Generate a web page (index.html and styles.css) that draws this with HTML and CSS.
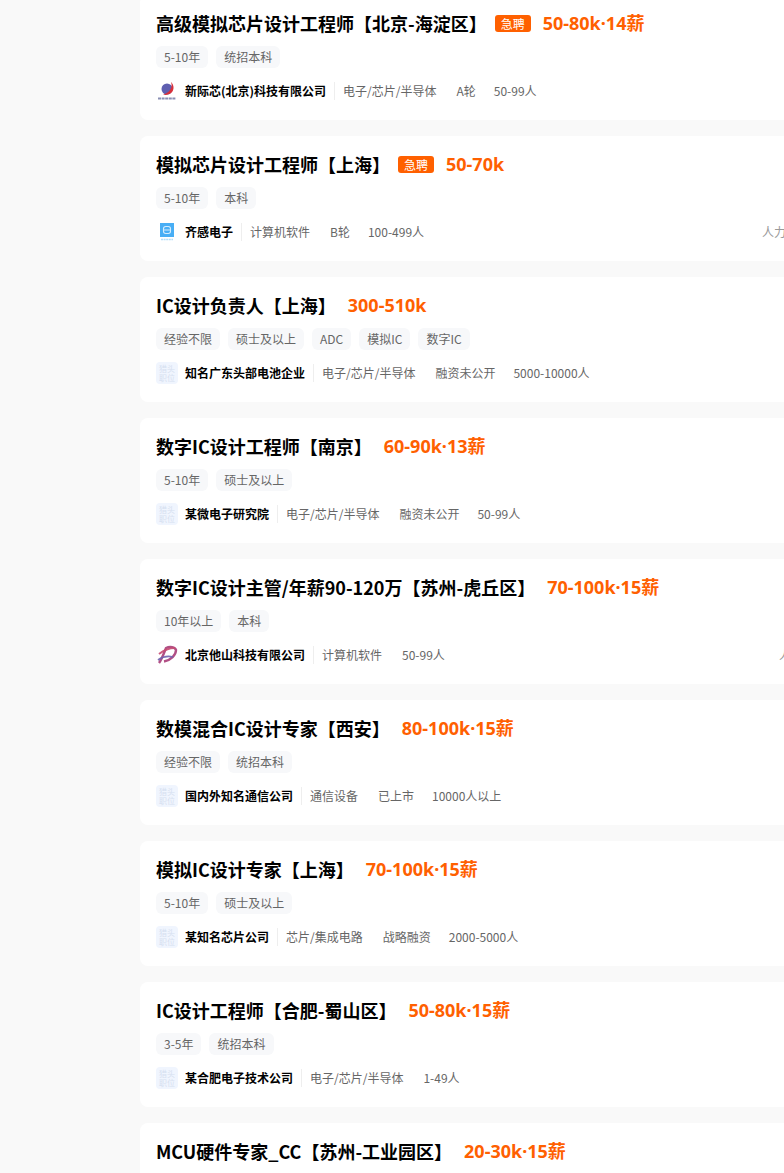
FILE: index.html
```html
<!DOCTYPE html>
<html lang="zh-CN">
<head>
  <meta charset="UTF-8" />
  <title>职位列表</title>
  <link rel="stylesheet" href="styles.css">
</head>
<body>
  <main class="job-list">

    <article class="job">
      <div class="job-title">
        <h3>高级模拟芯片设计工程师【北京-海淀区】</h3>
        <span class="urgent">急聘</span>
        <span class="salary">50-80k·14薪</span>
      </div>
      <div class="tags"><span>5-10年</span><span>统招本科</span></div>
      <div class="company">
        <svg class="logo" viewBox="0 0 22 22">
          <circle cx="11" cy="9" r="5.5" fill="#5f5fb0"/>
          <path d="M15 2 C17 7 14 13 7 14.5 C12 16 18 13 17.5 7 C17.3 5 16.4 3 15 2 Z" fill="#d8303a"/>
          <path d="M2 18.5h18" stroke="#8a8fb4" stroke-width="2" stroke-dasharray="3 .6"/>
        </svg>
        <strong>新际芯(北京)科技有限公司</strong>
        <span class="info">电子/芯片/半导体</span><span class="info">A轮</span><span class="info">50-99人</span>
      </div>
    </article>

    <article class="job">
      <div class="job-title">
        <h3>模拟芯片设计工程师【上海】</h3>
        <span class="urgent">急聘</span>
        <span class="salary">50-70k</span>
      </div>
      <div class="tags"><span>5-10年</span><span>本科</span></div>
      <div class="company">
        <svg class="logo" viewBox="0 0 22 22">
          <rect x="4" y="2" width="14" height="14" fill="#48aef5"/>
          <rect x="7.5" y="5.5" width="7" height="7" rx="2.2" fill="none" stroke="#d4ecfd" stroke-width="1.1"/>
          <path d="M7.5 9h7" stroke="#d4ecfd" stroke-width="1"/>
          <path d="M5 18.5h12" stroke="#b5def9" stroke-width="1.5" stroke-dasharray="2 .6"/>
        </svg>
        <strong>齐感电子</strong>
        <span class="info">计算机软件</span><span class="info">B轮</span><span class="info">100-499人</span>
        <span class="perks">人力资源服务</span>
      </div>
    </article>

    <article class="job">
      <div class="job-title">
        <h3>IC设计负责人【上海】</h3>
        <span class="salary">300-510k</span>
      </div>
      <div class="tags"><span>经验不限</span><span>硕士及以上</span><span>ADC</span><span>模拟IC</span><span>数字IC</span></div>
      <div class="company">
        <span class="logo logo-hidden">猎头<br>职位</span>
        <strong>知名广东头部电池企业</strong>
        <span class="info">电子/芯片/半导体</span><span class="info">融资未公开</span><span class="info">5000-10000人</span>
      </div>
    </article>

    <article class="job">
      <div class="job-title">
        <h3>数字IC设计工程师【南京】</h3>
        <span class="salary">60-90k·13薪</span>
      </div>
      <div class="tags"><span>5-10年</span><span>硕士及以上</span></div>
      <div class="company">
        <span class="logo logo-hidden">猎头<br>职位</span>
        <strong>某微电子研究院</strong>
        <span class="info">电子/芯片/半导体</span><span class="info">融资未公开</span><span class="info">50-99人</span>
      </div>
    </article>

    <article class="job">
      <div class="job-title">
        <h3>数字IC设计主管/年薪90-120万【苏州-虎丘区】</h3>
        <span class="salary">70-100k·15薪</span>
      </div>
      <div class="tags"><span>10年以上</span><span>本科</span></div>
      <div class="company">
        <svg class="logo" viewBox="0 0 22 22">
          <path d="M3 19 C6 15 8 9 10 4 C14 2 19 3 20 6 C20 11 15 16 8 17.5" fill="none" stroke="#a83c78" stroke-width="2.4" opacity=".9"/>
          <path d="M3 10 C8 6 13 4 19 4" fill="none" stroke="#c64a72" stroke-width="2" opacity=".9"/>
          <path d="M2 16 C7 12.5 13 12 17 13" fill="none" stroke="#6f62ae" stroke-width="1.8" opacity=".9"/>
        </svg>
        <strong>北京他山科技有限公司</strong>
        <span class="info">计算机软件</span><span class="info">50-99人</span>
        <span class="perks perks-short">人才服务</span>
      </div>
    </article>

    <article class="job">
      <div class="job-title">
        <h3>数模混合IC设计专家【西安】</h3>
        <span class="salary">80-100k·15薪</span>
      </div>
      <div class="tags"><span>经验不限</span><span>统招本科</span></div>
      <div class="company">
        <span class="logo logo-hidden">猎头<br>职位</span>
        <strong>国内外知名通信公司</strong>
        <span class="info">通信设备</span><span class="info">已上市</span><span class="info">10000人以上</span>
      </div>
    </article>

    <article class="job">
      <div class="job-title">
        <h3>模拟IC设计专家【上海】</h3>
        <span class="salary">70-100k·15薪</span>
      </div>
      <div class="tags"><span>5-10年</span><span>硕士及以上</span></div>
      <div class="company">
        <span class="logo logo-hidden">猎头<br>职位</span>
        <strong>某知名芯片公司</strong>
        <span class="info">芯片/集成电路</span><span class="info">战略融资</span><span class="info">2000-5000人</span>
      </div>
    </article>

    <article class="job">
      <div class="job-title">
        <h3>IC设计工程师【合肥-蜀山区】</h3>
        <span class="salary">50-80k·15薪</span>
      </div>
      <div class="tags"><span>3-5年</span><span>统招本科</span></div>
      <div class="company">
        <span class="logo logo-hidden">猎头<br>职位</span>
        <strong>某合肥电子技术公司</strong>
        <span class="info">电子/芯片/半导体</span><span class="info">1-49人</span>
      </div>
    </article>

    <article class="job">
      <div class="job-title">
        <h3>MCU硬件专家_CC【苏州-工业园区】</h3>
        <span class="salary">20-30k·15薪</span>
      </div>
    </article>

  </main>
</body>
</html>
```

FILE: styles.css
```css
html, body {
  height: 100%;
}
body {
  margin: 0;
  overflow: hidden;
  background-color: #f9f9f9;
  font-family: "Noto Sans CJK SC", "Noto Sans", sans-serif;
  color: #666;
}
.job-list {
  display: flex;
  flex-direction: column;
  gap: 16px;
  width: 710px;
  margin: -5px 0 0 140px;
}
.job {
  height: 125px;
  box-sizing: border-box;
  padding: 16px 16px 18px;
  background: white;
  border-radius: 8px;
}
.job-title {
  display: flex;
  align-items: center;
  height: 24px;
}
.job-title h3 {
  margin: 0 12px 0 0;
  font-size: 18px;
  line-height: 24px;
  font-weight: bold;
  white-space: nowrap;
  color: #000;
}
.urgent {
  width: 36px;
  height: 17px;
  margin: 0 12px 0 -4px;
  background-color: #ff6000;
  border-radius: 3px;
  color: white;
  font-size: 12px;
  line-height: 17px;
  text-align: center;
}
.salary {
  font-family: "Noto Sans", "Noto Sans CJK SC", sans-serif;
  font-size: 18px;
  line-height: 24px;
  font-weight: bold;
  white-space: nowrap;
  color: #ff6000;
}
.tags {
  display: flex;
  gap: 8px;
  margin-top: 11px;
}
.tags span {
  height: 22px;
  padding: 0 8px;
  background-color: #f7f8fa;
  border-radius: 6px;
  font-size: 12px;
  line-height: 22px;
}
.company {
  display: flex;
  align-items: center;
  height: 22px;
  margin-top: 12px;
  font-size: 12px;
  line-height: 22px;
  white-space: nowrap;
}
.logo {
  flex: none;
  width: 22px;
  height: 22px;
  margin-right: 7px;
}
.logo-hidden {
  box-sizing: border-box;
  padding-top: 2px;
  background-color: #f0f5fe;
  border-radius: 4px;
  color: #d6e0f0;
  font-size: 8px;
  line-height: 9px;
  text-align: center;
}
.company strong {
  color: #000;
  font-weight: bold;
}
.info {
  margin-left: 18px;
}
.company strong + .info {
  margin-left: 8px;
  padding-left: 9px;
  background: linear-gradient(#eee, #eee) left center / 1px 18px no-repeat;
}
.company strong + .info + .info {
  margin-left: 20px;
}
.perks {
  margin-left: auto;
  color: #999;
}
.perks-short {
  width: 55px;
}
```
